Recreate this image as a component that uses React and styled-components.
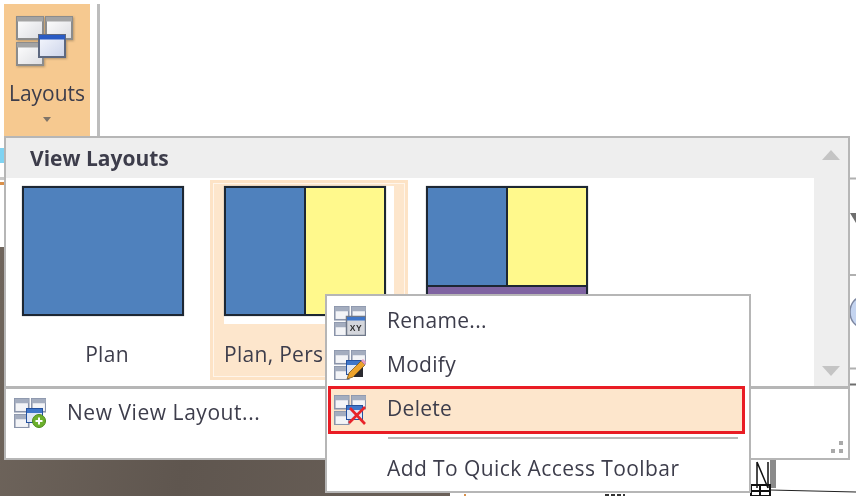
import styled, { createGlobalStyle } from "styled-components";

const GlobalStyle = createGlobalStyle`
	html, body {
		margin: 0;
		padding: 0;
		background: #fff;
	}
	* {
		box-sizing: border-box;
	}
`;

const TEXT = "#3d3d4b";
const PEACH = "#fde6cc";
const LINE = "#b6b6b6";
const BLUE = "#4f81bd";
const YELLOW = "#fff98c";
const PURPLE = "#8064a2";

const Stage = styled.div`
	position: relative;
	width: 856px;
	height: 496px;
	overflow: hidden;
	background: #fff;
	font-family: "Open Sans", "Noto Sans", sans-serif;
	font-size: 21px;
	font-weight: 500;
	letter-spacing: 0.3px;
	color: ${TEXT};
	filter: blur(0.45px);
`;

const Ribbon = styled.div`
	display: flex;
	gap: 7px;
	height: 137px;
	padding: 4px 0 0 4px;
`;

const LayoutsButton = styled.div`
	display: flex;
	flex-direction: column;
	align-items: center;
	width: 86px;
	background: #f6c990;
	padding-top: 12px;
`;

const BigIcon = styled.svg`
	margin-right: 2px;
	filter: drop-shadow(1px 1px 1px rgba(0, 0, 0, 0.25));
`;

const ButtonLabel = styled.div`
	margin-top: 11px;
	line-height: 28px;
	letter-spacing: 0;
`;

const DropArrow = styled.div`
	width: 0;
	height: 0;
	margin-top: 10px;
	border-left: 4px solid transparent;
	border-right: 4px solid transparent;
	border-top: 5px solid #7f7468;
`;

const RibbonDivider = styled.div`
	width: 3px;
	background: #bdbdbd;
`;

const Workspace = styled.div`
	display: grid;
	grid-template-columns: 450px 1fr;
	height: 359px;
`;

const LeftColumn = styled.div`
	display: flex;
	flex-direction: column;
`;

const LeftTop = styled.div`
	height: 110px;
	padding-top: 11px;
`;

const CyanMark = styled.div`
	width: 4px;
	height: 15px;
	background: #7fd3f2;
`;

const OrangeRule = styled.div`
	width: 6px;
	height: 3px;
	margin-top: 19px;
	background: #d9904a;
	box-shadow: 0 -5px 0 #c9c9c9;
`;

const BrownPanel = styled.div`
	flex: 1;
	background: linear-gradient(100deg, #6f655c 0%, #5f564f 45%, #6a6058 100%);
`;

const Drawing = styled.svg`
	display: block;
	width: 406px;
	height: 359px;
`;

const Gallery = styled.div`
	position: absolute;
	left: 4px;
	top: 136px;
	width: 846px;
	height: 324px;
	display: flex;
	flex-direction: column;
	background: #fff;
	border: 2px solid ${LINE};
`;

const GalleryBody = styled.div`
	display: flex;
	height: 248px;
`;

const GalleryMain = styled.div`
	flex: 1;
	display: flex;
	flex-direction: column;
`;

const GalleryTitle = styled.div`
	height: 40px;
	padding-left: 24px;
	background: #eeeeee;
	font-weight: 700;
	letter-spacing: 0;
	line-height: 40px;
`;

const CellRow = styled.div`
	display: flex;
	gap: 4px;
	padding: 2px 0 0 2px;
`;

const Cell = styled.div`
	width: 198px;
	height: 200px;
	padding: 6px 0 0 14px;
	background: ${(p) => (p.$selected ? PEACH : "#fff")};
	box-shadow: ${(p) =>
		p.$selected ? `inset 0 0 0 3px #fde3c6, inset 0 0 0 4px #fff5ea` : "none"};
`;

const ThumbFrame = styled.div`
	width: 170px;
	height: 138px;
	background: #fff;
`;

const Thumb = styled.div`
	display: grid;
	grid-template-columns: ${(p) => p.$cols};
	grid-template-rows: ${(p) => p.$rows};
	gap: 2px;
	width: 162px;
	height: 130px;
	padding: 2px;
	background: #1d2733;
	box-shadow: 0 0 1px #8a8a8a;
`;

const Pane = styled.div`
	background: ${(p) => p.$color};
	grid-column: ${(p) => p.$span || "auto"};
`;

const CellLabel = styled.div`
	margin: 16px 0 0 ${(p) => (p.$wide ? "0" : "-14px")};
	line-height: 28px;
	text-align: ${(p) => (p.$wide ? "left" : "center")};
	white-space: nowrap;
`;

const ScrollColumn = styled.div`
	display: flex;
	flex-direction: column;
	justify-content: space-between;
	align-items: center;
	width: 34px;
	padding: 12px 0 10px;
	background: #eeeeee;
`;

const ScrollArrow = styled.div`
	width: 0;
	height: 0;
	border-left: 9px solid transparent;
	border-right: 9px solid transparent;
	border-${(p) => (p.$up ? "bottom" : "top")}: 10px solid #c4c4c4;
`;

const GalleryFooter = styled.div`
	position: relative;
	flex: 1;
	display: flex;
	align-items: flex-start;
	gap: 21px;
	padding: 9px 0 0 8px;
	border-top: 3px solid ${LINE};
`;

const FooterLabel = styled.div`
	line-height: 28px;
	letter-spacing: 0.55px;
`;

const ResizeGrip = styled.svg`
	position: absolute;
	right: 4px;
	bottom: 4px;
	width: 14px;
	height: 14px;
`;

const ContextMenu = styled.div`
	position: absolute;
	left: 325px;
	top: 294px;
	width: 426px;
	padding: 3px 0 1px;
	background: #fff;
	border: 2px solid ${LINE};
`;

const MenuItem = styled.div`
	display: flex;
	align-items: center;
	gap: 21px;
	height: 44px;
	padding-left: 7px;
`;

const ItemLabel = styled.span`
	margin-top: -2px;
`;

const ActiveItem = styled(MenuItem)`
	height: 48px;
	margin: -1px 4px 0 1px;
	padding-left: 3px;
	background: ${PEACH};
	border: 3px solid #e91c24;
	${ItemLabel} {
		margin-top: -4px;
	}
`;

const PlainItem = styled(MenuItem)`
	margin-top: 7px;
	padding-left: 60px;
	letter-spacing: 0.42px;
	${ItemLabel} {
		margin-top: 0;
	}
`;

const MenuSeparator = styled.div`
	height: 2px;
	margin: 3px 11px 0 61px;
	background: #b9b9b9;
`;

// small stacked windows icon, the big ribbon one is drawn apart below
function MiniWindow({ x, y, w, h }) {
	return (
		<g>
			<rect x={x + 0.75} y={y + 0.75} width={w} height={h} fill="#f3f4f7" stroke="#8a94aa" strokeWidth="1.6" />
			<rect x={x + 0.75} y={y + 0.75} width={w} height={4.5} fill="#a4adbf" />
		</g>
	);
}

function LayoutIcon({ overlay }) {
	return (
		<svg width="32" height="30" viewBox="0 0 32 30" style={{ flexShrink: 0 }}>
			<MiniWindow x={0} y={0} w={14} h={13} />
			<MiniWindow x={17} y={0} w={14} h={13} />
			<MiniWindow x={0} y={16} w={14} h={13} />
			{overlay === "rename" ? (
				<g>
					<rect x="12.5" y="10.5" width="19" height="19" fill="#d4d6dc" stroke="#6f7889" strokeWidth="1.5" />
					<rect x="13" y="11" width="18" height="3.5" fill="#3f76c9" />
					<text
						x="22"
						y="25"
						fontSize="8.5"
						fontWeight="700"
						textAnchor="middle"
						letterSpacing="0.5"
						fontFamily="Liberation Sans, sans-serif"
						fill="#2d2d2d"
					>
						XY
					</text>
				</g>
			) : (
				<g>
					<rect x="12.5" y="10.5" width="16" height="14" fill="#dfe7f6" stroke="#24519f" />
					<rect x="13" y="11" width="15" height="4" fill="#3f76c9" />
				</g>
			)}
			{overlay === "modify" && (
				<g>
					<rect x="20" y="18" width="9" height="9" fill="#2a2a30" />
					<path d="M13 29 L15 23 L27 11 L31 15 L19 27 Z" fill="#eda32c" stroke="#6b4a12" strokeWidth="0.7" />
					<path d="M27 11 L29 9 L32 12 L31 15 Z" fill="#e79ac4" />
				</g>
			)}
			{overlay === "delete" && (
				<path d="M16 13 L31 29 M31 12 L15 28" stroke="#e8232a" strokeWidth="2.6" />
			)}
			{overlay === "add" && (
				<g>
					<circle cx="25" cy="23" r="6.5" fill="#6cb02c" stroke="#4c8a1c" />
					<path d="M25 19.5 V26.5 M21.5 23 H28.5" stroke="#fff" strokeWidth="2" />
				</g>
			)}
		</svg>
	);
}

function BigLayoutIcon() {
	return (
		<BigIcon width="60" height="52" viewBox="0 0 60 52">
			<defs>
				<linearGradient id="winFill" x1="0" y1="0" x2="1" y2="1">
					<stop offset="0" stopColor="#ffffff" />
					<stop offset="1" stopColor="#dcdde2" />
				</linearGradient>
				<linearGradient id="blueFill" x1="0" y1="0" x2="1" y2="1">
					<stop offset="0" stopColor="#f6f8fe" />
					<stop offset="1" stopColor="#ccd4ea" />
				</linearGradient>
			</defs>
			{[
				[1, 1],
				[30, 1],
				[1, 27],
			].map(([x, y]) => (
				<g key={x + "-" + y}>
					<rect x={x} y={y} width="26" height="22" fill="url(#winFill)" stroke="#8c8c8c" strokeWidth="2" />
					<rect x={x} y={y} width="26" height="4.5" fill="#a3a3a3" />
				</g>
			))}
			<rect x="23" y="19" width="26" height="22" fill="url(#blueFill)" stroke="#5d6880" strokeWidth="2" />
			<rect x="23" y="19" width="26" height="4.5" fill="#2a5bc4" />
		</BigIcon>
	);
}

function App() {
	return (
		<Stage>
			<GlobalStyle />
			<Ribbon>
				<LayoutsButton>
					<BigLayoutIcon />
					<ButtonLabel>Layouts</ButtonLabel>
					<DropArrow />
				</LayoutsButton>
				<RibbonDivider />
			</Ribbon>
			<Workspace>
				<LeftColumn>
					<LeftTop>
						<CyanMark />
						<OrangeRule />
					</LeftTop>
					<BrownPanel />
				</LeftColumn>
				<Drawing viewBox="450 137 406 359">
					<path d="M850 178.5 H856 M850 275 H856 M850 368.5 H856" stroke="#b0b0b0" strokeWidth="2" />
					<path d="M850 384.5 H856" stroke="#6e6e6e" strokeWidth="2" />
					<path d="M850 213 L856 213 L856 223 Z" fill="#6e6e6e" />
					<ellipse cx="862" cy="312" rx="12" ry="15" fill="#c4d4f0" stroke="#7c86a0" strokeWidth="1.5" />
					<rect x="770" y="460" width="6" height="28" fill="#8a8a8a" />
					<path d="M757 462 V488 M757 462 L768 488 M768 462 V488" stroke="#111" strokeWidth="1.5" fill="none" />
					<path d="M751 485 H770 V496 H751 Z M760 485 V496 M751 491 H770" stroke="#111" strokeWidth="2" fill="none" />
					<path d="M770 490 L856 492" stroke="#222" strokeWidth="1" />
					<path d="M465 494 V496" stroke="#d9904a" strokeWidth="2" />
					<path d="M605 495 H625" stroke="#333" strokeWidth="2" strokeDasharray="4 2" />
				</Drawing>
			</Workspace>
			<Gallery>
				<GalleryBody>
					<GalleryMain>
						<GalleryTitle>View Layouts</GalleryTitle>
						<CellRow>
							<Cell>
								<ThumbFrame>
									<Thumb $cols="1fr" $rows="1fr">
										<Pane $color={BLUE} />
									</Thumb>
								</ThumbFrame>
								<CellLabel>Plan</CellLabel>
							</Cell>
							<Cell $selected>
								<ThumbFrame>
									<Thumb $cols="1fr 1fr" $rows="1fr">
										<Pane $color={BLUE} />
										<Pane $color={YELLOW} />
									</Thumb>
								</ThumbFrame>
								<CellLabel $wide>Plan, Perspective</CellLabel>
							</Cell>
							<Cell>
								<ThumbFrame>
									<Thumb $cols="1fr 1fr" $rows="97px 1fr">
										<Pane $color={BLUE} />
										<Pane $color={YELLOW} />
										<Pane $color={PURPLE} $span="1 / 3" />
									</Thumb>
								</ThumbFrame>
							</Cell>
						</CellRow>
					</GalleryMain>
					<ScrollColumn>
						<ScrollArrow $up />
						<ScrollArrow />
					</ScrollColumn>
				</GalleryBody>
				<GalleryFooter>
					<LayoutIcon overlay="add" />
					<FooterLabel>New View Layout...</FooterLabel>
					<ResizeGrip viewBox="0 0 14 14">
						<rect x="9" y="1" width="4" height="4" fill="#a9a9a9" />
						<rect x="1" y="9" width="4" height="4" fill="#a9a9a9" />
						<rect x="9" y="9" width="4" height="4" fill="#a9a9a9" />
					</ResizeGrip>
				</GalleryFooter>
			</Gallery>
			<ContextMenu>
				<MenuItem>
					<LayoutIcon overlay="rename" />
					<ItemLabel>Rename...</ItemLabel>
				</MenuItem>
				<MenuItem>
					<LayoutIcon overlay="modify" />
					<ItemLabel>Modify</ItemLabel>
				</MenuItem>
				<ActiveItem>
					<LayoutIcon overlay="delete" />
					<ItemLabel>Delete</ItemLabel>
				</ActiveItem>
				<MenuSeparator />
				<PlainItem>
					<ItemLabel>Add To Quick Access Toolbar</ItemLabel>
				</PlainItem>
			</ContextMenu>
		</Stage>
	);
}

export default App;
